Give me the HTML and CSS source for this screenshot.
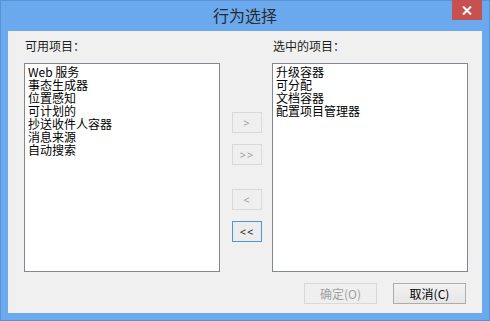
FILE: index.html
```html
<!DOCTYPE html>
<html lang="zh-CN">
<head>
  <meta charset="UTF-8" />
  <meta name="viewport" content="width=device-width, initial-scale=1.0"/>
  <title>行为选择</title>
  <link rel="stylesheet" href="styles.css">
</head>
<body>
  <div class="window">
    <div class="titlebar">
      <span></span>
      <h1 class="title">行为选择</h1>
      <div class="title-right">
        <button class="close" title="关闭">
          <svg width="10" height="9" viewBox="0 0 10 9">
            <path d="M1 0.5 L9 8.5 M9 0.5 L1 8.5" stroke="#fff" stroke-width="2" fill="none"/>
          </svg>
        </button>
      </div>
    </div>

    <div class="client">
      <div class="panes">
        <div class="pane-label left">可用项目：</div>
        <div class="pane-label right">选中的项目：</div>

        <ul class="listbox left">
          <li>Web 服务</li>
          <li>事态生成器</li>
          <li>位置感知</li>
          <li>可计划的</li>
          <li>抄送收件人容器</li>
          <li>消息来源</li>
          <li>自动搜索</li>
        </ul>

        <div class="movers">
          <button class="mover" disabled>&gt;</button>
          <button class="mover" disabled>&gt;&gt;</button>
          <button class="mover gap" disabled>&lt;</button>
          <button class="mover active">&lt;&lt;</button>
        </div>

        <ul class="listbox right">
          <li>升级容器</li>
          <li>可分配</li>
          <li>文档容器</li>
          <li>配置项目管理器</li>
        </ul>
      </div>

      <div class="actions">
        <button class="btn" disabled>确定(O)</button>
        <button class="btn">取消(C)</button>
      </div>
    </div>
  </div>
</body>
</html>
```

FILE: styles.css
```css
* {
  box-sizing: border-box;
}

body {
  margin: 0;
  font-family: "Noto Sans CJK SC", "Noto Sans", sans-serif;
  background-color: #6aa9ee;
}

.window {
  width: 490px;
  height: 321px;
  border: 1px solid #5b92d4;
  background-color: #6aa9ee;
  padding: 0 7px 7px 7px;
  display: flex;
  flex-direction: column;
}

.titlebar {
  height: 30px;
  display: grid;
  grid-template-columns: 1fr auto 1fr;
  align-items: start;
}

.title {
  margin: 0;
  font-size: 16px;
  font-weight: normal;
  line-height: 28px;
  color: #2b2b2b;
}

.title-right {
  display: flex;
  justify-content: flex-end;
}

.close {
  width: 30px;
  height: 20px;
  margin-top: -1px;
  border: none;
  padding: 0;
  background-color: #c75050;
  display: flex;
  align-items: center;
  justify-content: center;
}

.client {
  height: 282px;
  background-color: #f0f0f0;
  padding: 7px 14px 0 16px;
}

.panes {
  display: grid;
  grid-template-columns: 196px 52px 196px;
  grid-template-rows: 25px 209px;
}

.pane-label {
  font-size: 12px;
  line-height: 16px;
  color: #1e1e1e;
  padding-left: 1px;
}

.pane-label.left {
  grid-column: 1;
  grid-row: 1;
}

.pane-label.right {
  grid-column: 3;
  grid-row: 1;
}

.listbox {
  grid-row: 2;
  margin: 0;
  padding: 1px 3px;
  list-style: none;
  background-color: #fff;
  border: 1px solid #828790;
  font-size: 12px;
  line-height: 13px;
  color: #000;
}

.listbox.left {
  grid-column: 1;
}

.listbox.right {
  grid-column: 3;
}

.movers {
  grid-column: 2;
  grid-row: 2;
  display: flex;
  flex-direction: column;
  align-items: flex-start;
  padding: 49px 0 0 12px;
  gap: 11px;
}

.mover {
  width: 30px;
  height: 21px;
  padding: 0;
  font-family: "Noto Sans", sans-serif;
  font-size: 11px;
  line-height: 19px;
  letter-spacing: 1px;
  color: #a0a0a0;
  background-color: #efefef;
  border: 1px solid #d9d9d9;
}

.mover.gap {
  margin-top: 13px;
}

.mover.active {
  color: #1e1e1e;
  background-color: #ececec;
  border: 1px solid #4f95d8;
}

.actions {
  display: flex;
  justify-content: flex-end;
  gap: 16px;
  margin: 11px 2px 0 0;
}

.btn {
  width: 73px;
  height: 21px;
  padding: 0;
  font-family: "Noto Sans CJK SC", sans-serif;
  font-size: 12px;
  line-height: 19px;
  color: #000;
  background: linear-gradient(#f2f2f2, #e6e6e6);
  border: 1px solid #adadad;
}

.btn:disabled {
  color: #a0a0a0;
  background: #efefef;
  border-color: #d9d9d9;
}
```
